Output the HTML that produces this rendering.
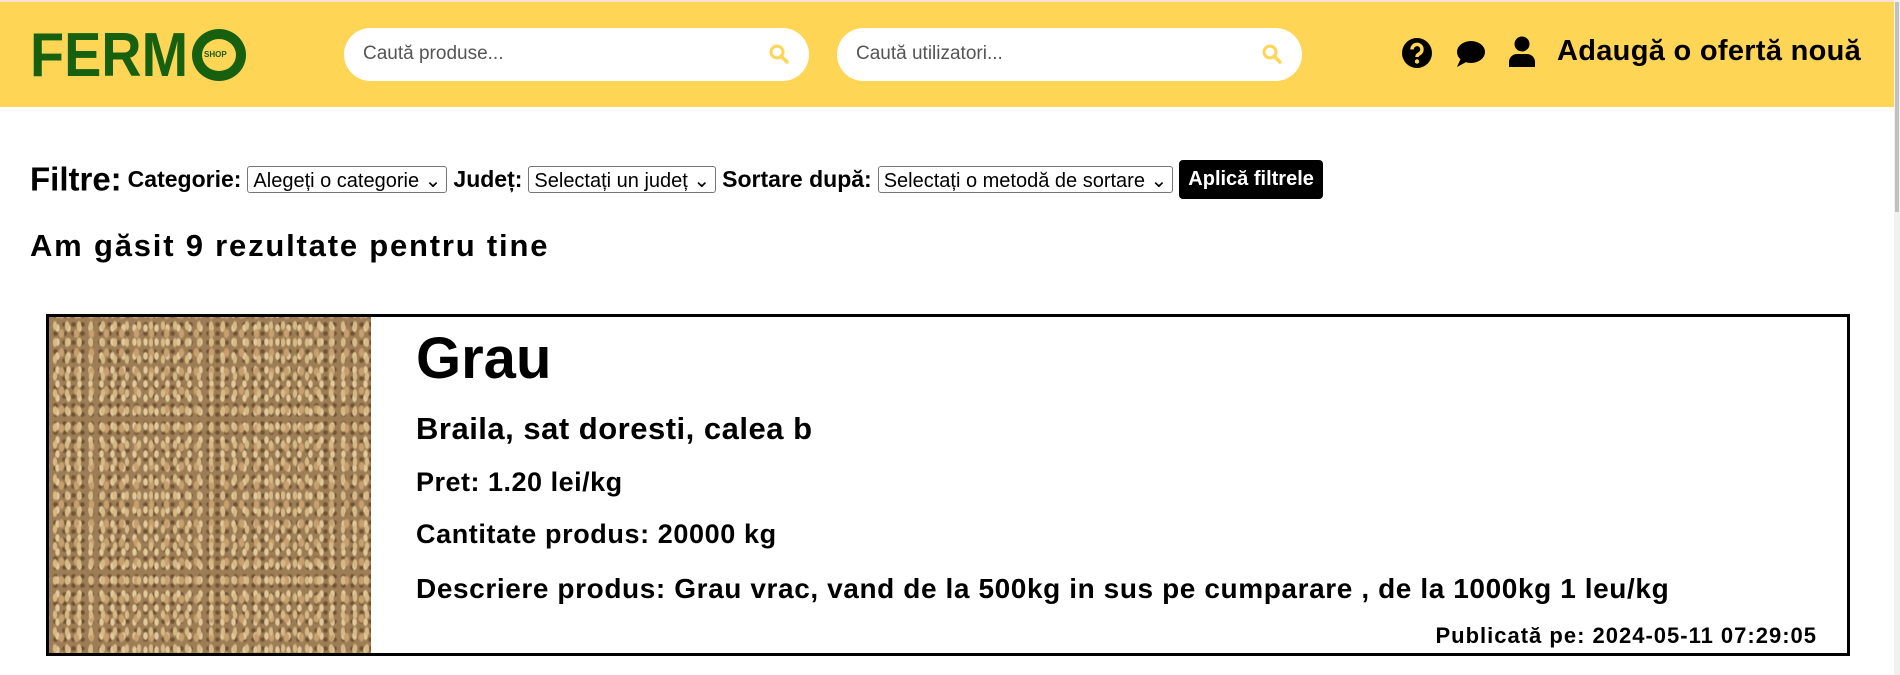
<!DOCTYPE html>
<html><head><meta charset="utf-8"><style>
*{margin:0;padding:0;box-sizing:border-box}
body{width:1900px;height:675px;overflow:hidden;background:#fff;font-family:"Liberation Sans",sans-serif;position:relative;color:#000}
.hdr{position:absolute;left:0;top:0;width:1894px;height:107px;background:#ffd556;border-top:2px solid #fbe0d8}
.sb{position:absolute;right:0;top:0;width:6px;height:675px;background:#f1f1f1}
.sb i{position:absolute;left:1px;top:2px;width:4px;height:210px;background:#c1c1c1}
.logo{position:absolute;left:30px;top:22px;font-weight:bold;font-size:62px;color:#17600f;transform:scaleX(0.9);transform-origin:left;line-height:68px}
.ring{position:absolute;left:192px;top:29px;width:54px;height:52px;border:10px solid #17600f;border-radius:50%}
.ring span{position:absolute;left:2px;top:11px;font-size:8px;font-weight:bold;color:#17600f}
.search{position:absolute;top:28px;height:53px;width:465px;background:#fff;border-radius:27px;font-size:19px;color:#555;padding:15px 0 0 19px}
.search svg{position:absolute;right:20px;top:16px}
.icons{position:absolute;top:37px}
.add{position:absolute;left:1557px;top:35px;font-weight:bold;font-size:29px;letter-spacing:0.3px}
.filt{position:absolute;left:30px;top:160px;font-weight:bold;white-space:nowrap}
.filt b{font-size:33px;vertical-align:middle}
.filt span{font-size:23px;vertical-align:middle;margin-left:6px}
.sel{display:inline-block;vertical-align:middle;border:1px solid #767676;border-radius:3px;font-weight:normal;font-size:20px!important;height:27px;padding:1px 5px;margin-left:6px;font-family:"Liberation Sans",sans-serif}
.btn{display:inline-block;vertical-align:middle;background:#000;color:#fff;border-radius:4px;font-size:20px!important;padding:8px 9px;margin-left:7px}
h2{position:absolute;left:30px;top:228px;font-size:31px;font-weight:bold;letter-spacing:1.8px}
.card{position:absolute;left:46px;top:314px;width:1804px;height:342px;border:3px solid #000}
.img{position:absolute;left:0;top:0;width:322px;height:336px;background-color:#9c7d55;
background-image:radial-gradient(ellipse 4px 8px at 50% 50%,#d7b987 40%,transparent 70%),radial-gradient(ellipse 5px 8px at 50% 50%,#c7a070 40%,transparent 70%),radial-gradient(ellipse 4px 7px at 50% 50%,#e2c89b 40%,transparent 70%),radial-gradient(circle at 50% 50%,#6e5232 20%,transparent 50%);
background-size:12px 17px,15px 19px,11px 14px,9px 9px;background-position:0 0,5px 7px,3px 4px,2px 3px}
.t{position:absolute;left:367px;font-weight:bold;white-space:nowrap}
</style></head><body>
<div class="hdr"></div>
<div class="sb"><i></i></div>
<div class="logo">FERM</div>
<div class="ring"><span>SHOP</span></div>
<div class="search" style="left:344px">Caută produse...<svg width="20" height="20" viewBox="0 0 20 20"><circle cx="8" cy="8" r="6" fill="none" stroke="#ffd556" stroke-width="3"/><path d="M12 12l6 6" stroke="#ffd556" stroke-width="3.5" stroke-linecap="round"/></svg></div>
<div class="search" style="left:837px">Caută utilizatori...<svg width="20" height="20" viewBox="0 0 20 20"><circle cx="8" cy="8" r="6" fill="none" stroke="#ffd556" stroke-width="3"/><path d="M12 12l6 6" stroke="#ffd556" stroke-width="3.5" stroke-linecap="round"/></svg></div>
<svg class="icons" style="left:1401px" width="32" height="32" viewBox="0 0 32 32"><circle cx="16" cy="16" r="15" fill="#000"/><path d="M11 12.5a5 5 0 1 1 7 4.5c-1.5.8-2 1.5-2 3" fill="none" stroke="#ffd556" stroke-width="3.5"/><circle cx="16" cy="24.5" r="2.2" fill="#ffd556"/></svg>
<svg class="icons" style="left:1454px;top:40px" width="32" height="28" viewBox="0 0 32 28"><ellipse cx="17" cy="12" rx="14" ry="11" fill="#000"/><path d="M7 18 L3 27 L14 21z" fill="#000"/></svg>
<svg class="icons" style="left:1508px;top:36px" width="28" height="32" viewBox="0 0 28 32"><circle cx="14" cy="8" r="7.5" fill="#000"/><path d="M1 31v-5a8 8 0 0 1 8-8h10a8 8 0 0 1 8 8v5z" fill="#000"/></svg>
<div class="add">Adaugă o ofertă nouă</div>
<div class="filt"><b>Filtre:</b><span>Categorie:</span><span class="sel">Alegeți o categorie ⌄</span><span>Județ:</span><span class="sel">Selectați un județ ⌄</span><span>Sortare după:</span><span class="sel">Selectați o metodă de sortare ⌄</span><span class="btn">Aplică filtrele</span></div>
<h2>Am găsit 9 rezultate pentru tine</h2>
<div class="card"><div class="img"></div>
<div class="t" style="top:8px;font-size:58px">Grau</div>
<div class="t" style="top:94px;font-size:31px;letter-spacing:0.5px">Braila, sat doresti, calea b</div>
<div class="t" style="top:150px;font-size:27px;letter-spacing:0.5px">Pret: 1.20 lei/kg</div>
<div class="t" style="top:202px;font-size:27px;letter-spacing:0.6px">Cantitate produs: 20000 kg</div>
<div class="t" style="top:256px;font-size:28px;letter-spacing:0.6px">Descriere produs: Grau vrac, vand de la 500kg in sus pe cumparare , de la 1000kg 1 leu/kg</div>
<div class="t" style="top:306px;left:auto;right:30px;font-size:22px;letter-spacing:1px">Publicată pe: 2024-05-11 07:29:05</div>
</div>
</body></html>
